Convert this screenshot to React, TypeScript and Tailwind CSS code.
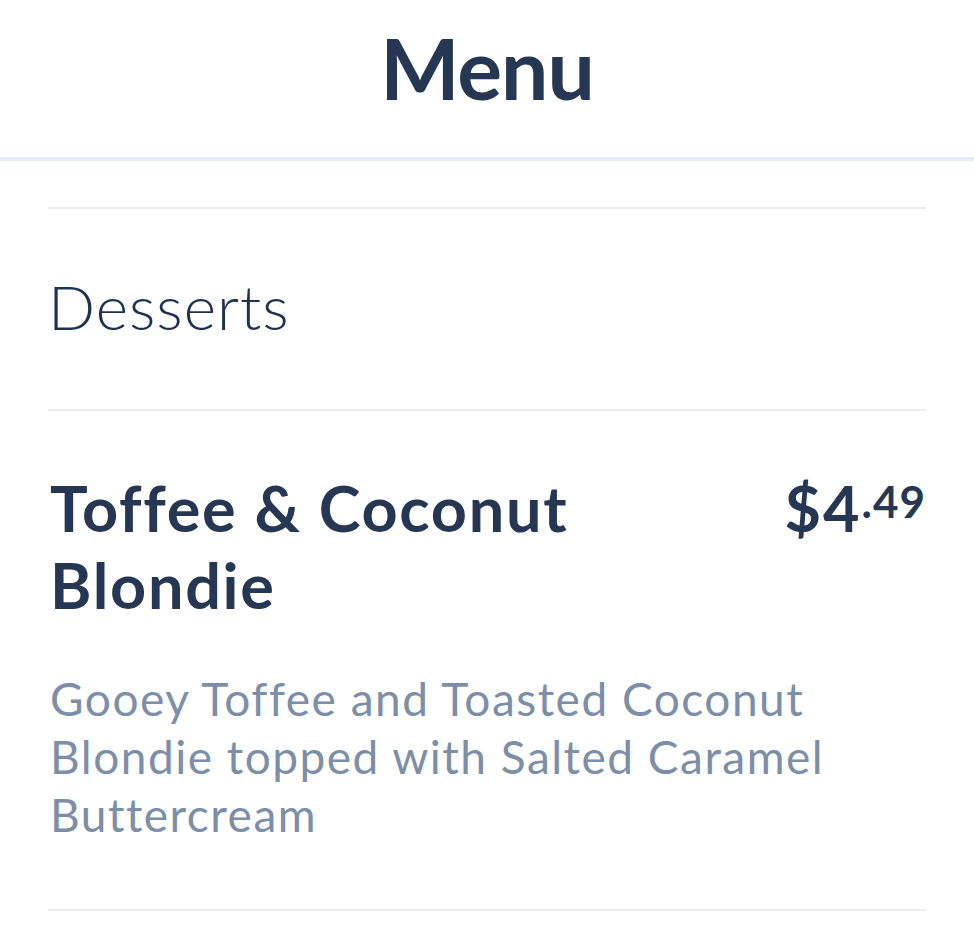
import React from "react";

export default function App() {
  const font = { fontFamily: "Lato, 'Noto Sans', sans-serif" };
  return (
    <div className="min-h-screen w-full bg-white [font-variant-ligatures:none]" style={font}>
      <header className="h-[161px] border-b-4 border-[#e4ebf5] flex justify-center pt-[18px]">
        <h1 className="text-[84px] leading-[100px] font-bold text-[#263753] tracking-[-1px]">Menu</h1>
      </header>
      <div className="px-12 pt-[46px]">
        <div className="h-[2px] bg-[#ededed]" />
        <div className="pt-[60px] pb-[66px]">
          <h2 className="text-[62px] leading-[74px] font-light text-[#1f3151] tracking-[1px]">Desserts</h2>
        </div>
        <div className="h-[2px] bg-[#ededed]" />
        <div className="pt-[58px] pb-[65px] pl-[2px]">
          <div className="flex justify-between items-start">
            <h3 className="text-[63px] leading-[77px] font-bold text-[#263753] tracking-[1.7px] w-[600px]">
              Toffee &amp; Coconut Blondie
            </h3>
            <div className="flex items-start text-[#263753] font-bold">
              <span className="text-[63px] leading-[77px] tracking-[2px]">$4</span>
              <span className="text-[44px] leading-[44px] mt-[10px] tracking-[1px]">.49</span>
            </div>
          </div>
          <p className="mt-[47px] text-[46px] leading-[58px] text-[#7d8ea8] tracking-[1.5px] w-[820px]">
            Gooey Toffee and Toasted Coconut Blondie topped with Salted Caramel Buttercream
          </p>
        </div>
        <div className="h-[2px] bg-[#ededed]" />
      </div>
    </div>
  );
}
